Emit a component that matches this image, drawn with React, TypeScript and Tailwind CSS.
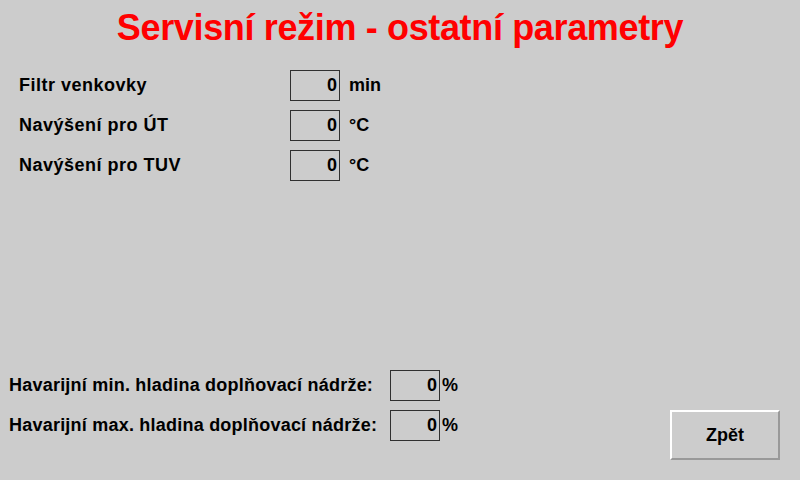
import React from "react";

const font = { fontFamily: '"Liberation Sans", Arial, sans-serif' };

function Box({ value }: { value: string }) {
  return (
    <div className="w-[50px] h-[31px] border border-[#303030] flex items-center justify-end pr-[2px] text-[18px] font-bold leading-[31px] text-black">
      {value}
    </div>
  );
}

export default function App() {
  const top = [
    { label: "Filtr venkovky", unit: "min" },
    { label: "Navýšení pro ÚT", unit: "°C" },
    { label: "Navýšení pro TUV", unit: "°C" },
  ];
  const bottom = [
    "Havarijní min. hladina doplňovací nádrže:",
    "Havarijní max. hladina doplňovací nádrže:",
  ];
  return (
    <div className="w-[800px] h-[480px] bg-[#cccccc] flex flex-col overflow-hidden" style={font}>
      <div className="pt-[10px] h-[46px] text-center text-[36px] leading-[36px] font-bold text-[#ff0000] tracking-[-0.35px]">
        Servisní režim - ostatní parametry
      </div>
      <div className="mt-[24px] pl-[19px] flex flex-col gap-[9px]">
        {top.map((r) => (
          <div key={r.label} className="flex items-center h-[31px]">
            <div className="w-[271px] text-[18px] font-bold leading-[31px] tracking-[0.5px] text-black">{r.label}</div>
            <Box value="0" />
            <div className="ml-[9px] text-[18px] font-bold leading-[31px] text-black">{r.unit}</div>
          </div>
        ))}
      </div>
      <div className="flex-1" />
      <div className="flex justify-between items-end pb-[20px]">
        <div className="pl-[9px] mb-[19px] flex flex-col gap-[9px]">
          {bottom.map((l) => (
            <div key={l} className="flex items-center h-[31px]">
              <div className="w-[381px] text-[18px] font-bold leading-[31px] tracking-[0.22px] text-black whitespace-nowrap">{l}</div>
              <Box value="0" />
              <div className="ml-[2px] text-[18px] font-bold leading-[31px] text-black">%</div>
            </div>
          ))}
        </div>
        <div className="mr-[20px] w-[110px] h-[50px] border-2 border-t-white border-l-white border-r-[#999999] border-b-[#999999] bg-[#cccccc] flex items-center justify-center text-[18px] font-bold text-black">
          Zpět
        </div>
      </div>
    </div>
  );
}
